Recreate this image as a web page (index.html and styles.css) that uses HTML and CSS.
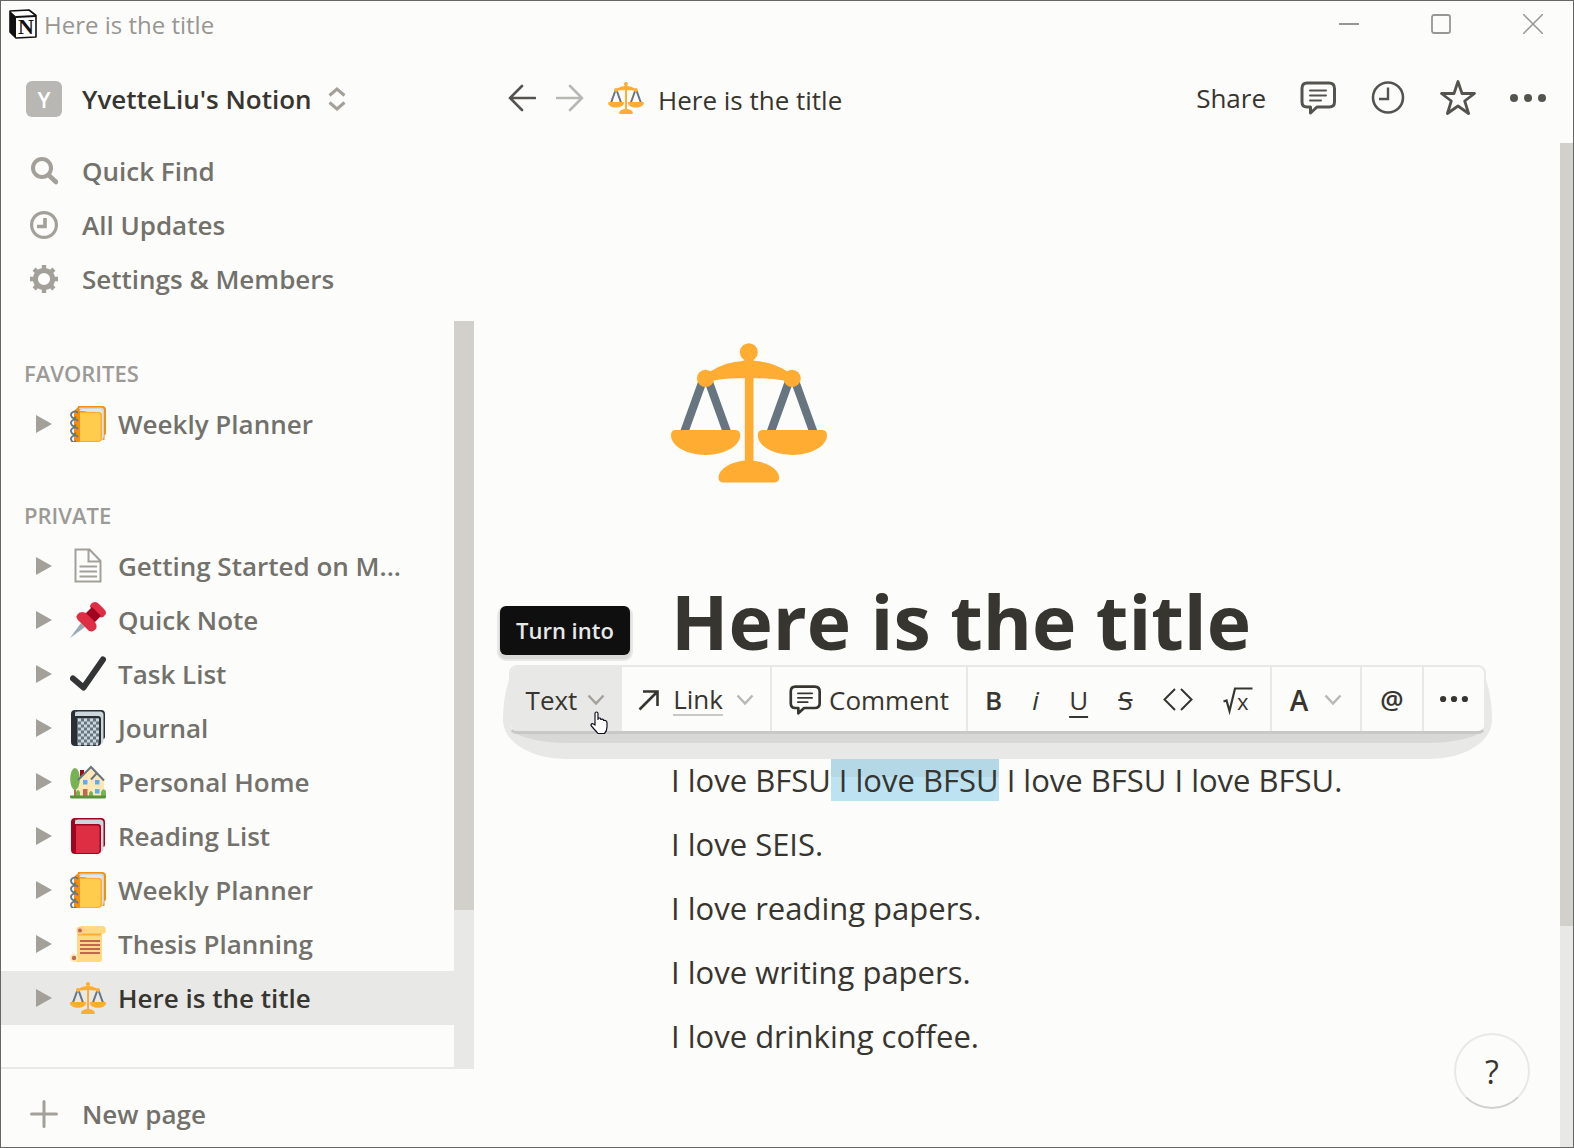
FILE: index.html
```html
<!DOCTYPE html>
<html lang="en">
<head>
<meta charset="utf-8">
<title>Here is the title</title>
<link rel="stylesheet" href="styles.css">
</head>
<body>
<svg class="defs" aria-hidden="true">
  <symbol id="scales" viewBox="96 69 469 420">
    <path d="M190 186 136 336M210 186 264 336M450 186 396 336M470 186 524 336" stroke="#66757f" stroke-width="25" fill="none"/>
    <g fill="#ffac33">
      <path d="M318 110h26v320h-26z"/>
      <path d="M214 154Q262 125 312 123Q330 110 348 123Q398 125 446 154L436 181Q390 174 330 174T224 181z"/>
      <circle cx="330" cy="96" r="27"/><circle cx="200" cy="175" r="26"/><circle cx="460" cy="175" r="26"/>
      <path d="M109 330H291Q304 331 304 346C304 378 258 405 200 405S96 378 96 346Q96 331 109 330zM370 330H552Q565 331 565 346C565 378 519 405 461 405S357 378 357 346Q357 331 370 330z"/>
      <path d="M252 488H408Q421 487 421 473C421 447 380 422 330 422S239 447 239 473Q239 487 252 488z"/>
    </g>
  </symbol>
  <symbol id="notebook" viewBox="0 0 36 36">
    <path d="M8 0H32Q36 0 36 4V27Q36 29 34.500 29V34L8 32z" fill="#f4900c"/>
    <path d="M9 3Q9 1.500 11 1.500H31Q34 1.500 34 4V30Q34 33 31 35L29 10z" fill="#ccd6dd"/>
    <path d="M9 5Q10 3 13 3H30Q32.500 3 32.500 6V32L30 34V6z" fill="#e1e8ed"/>
    <path d="M5 6H29Q32 6 32 9V32Q32 36 28 36H5z" fill="#ffac33"/>
    <path d="M10 7H28Q30.500 7 30.500 9.500V32Q30.500 35 27.500 35H10z" fill="#ffcc4d"/>
    <path d="M4 5 8 1 10 6V36H4z" fill="#f4900c"/>
    <path d="M8 7Q6 4.500 3 6T1.500 10.500 6 11M8 15Q6 12.500 3 14T1.500 18.500 6 19M8 23Q6 20.500 3 22T1.500 26.500 6 27M8 31Q6 28.500 3 30T1.500 34.500 6 35" fill="none" stroke="#66757f" stroke-width="1.800"/>
  </symbol>
  <symbol id="comment" viewBox="0 0 36 36">
    <path d="M7 3H29Q34.500 3 34.500 8.500V22Q34.500 27 29 27H17L10.500 33V27H7Q2 27 2 22V8.500Q2 3 7 3z" fill="none" stroke="currentColor" stroke-width="3" stroke-linejoin="round"/>
    <path d="M10 10.500H26M10 15.500H26M10 20.500H21" fill="none" stroke="currentColor" stroke-width="2" stroke-linecap="round"/>
  </symbol>
  <symbol id="arrow" viewBox="0 0 28 28">
    <path d="M27 14H2M14 2 2 14 14 26" fill="none" stroke="currentColor" stroke-width="2.600" stroke-linecap="round"/>
  </symbol>
  <symbol id="chevron" viewBox="0 0 18 12">
    <path d="M1.500 1.500 9 9.500 16.500 1.500" fill="none" stroke="currentColor" stroke-width="2.400"/>
  </symbol>
  <symbol id="triangle" viewBox="0 0 16 18"><path d="M0 0 16 9 0 18z" fill="currentColor"/></symbol>
  <symbol id="dots" viewBox="0 0 36 36">
    <g fill="currentColor"><circle cx="4" cy="18" r="4"/><circle cx="18" cy="18" r="4"/><circle cx="32" cy="18" r="4"/></g>
  </symbol>
</svg>

<div class="window">
  <header class="titlebar">
    <svg class="logo" viewBox="0 0 28 30" aria-hidden="true">
      <path d="M1 2 20 1 27 6.500V28L7 29 1 23z" fill="#fff" stroke="#111" stroke-width="1.600" stroke-linejoin="round"/>
      <path d="M1 2 7 7.500V29L1 23z" fill="#111"/>
      <path d="M7 8 27 7" stroke="#111" stroke-width="2.200"/>
      <text x="17" y="25" text-anchor="middle" class="logo-letter">N</text>
    </svg>
    <span class="window-title">Here is the title</span>
    <div class="window-controls">
      <button type="button" aria-label="Minimize"><svg viewBox="0 0 20 20"><path d="M0 10H20" stroke-width="2"/></svg></button>
      <button type="button" aria-label="Maximize"><svg viewBox="0 0 20 20"><rect x="1" y="1" width="18" height="18" rx="2" stroke-width="1.800"/></svg></button>
      <button type="button" aria-label="Close"><svg viewBox="0 0 20 20"><path d="M0 0 20 20M20 0 0 20" stroke-width="1.500"/></svg></button>
    </div>
  </header>

  <div class="body">
    <aside class="sidebar">
      <button type="button" class="workspace">
        <span class="avatar">Y</span>
        <span>YvetteLiu's Notion</span>
        <svg class="updown" viewBox="0 0 18 24" aria-hidden="true"><path d="M1.500 8.500 9 2 16.500 8.500M1.500 15.500 9 22 16.500 15.500"/></svg>
      </button>

      <nav class="quick">
        <a href="#find"><svg viewBox="0 0 28 28"><circle cx="12" cy="11" r="9" fill="none" stroke="currentColor" stroke-width="4"/><path d="M18.500 18 26 25" stroke="currentColor" stroke-width="4.600" stroke-linecap="round"/></svg>Quick Find</a>
        <a href="#updates"><svg viewBox="0 0 28 28"><circle cx="14" cy="14" r="12.400" fill="none" stroke="currentColor" stroke-width="3.200"/><path d="M15 7V15.500H7" fill="none" stroke="currentColor" stroke-width="3.600"/></svg>All Updates</a>
        <a href="#settings"><svg viewBox="0 0 28 28"><circle cx="14" cy="14" r="8.600" fill="none" stroke="currentColor" stroke-width="5"/><path d="M14 0V5M14 23V28M0 14H5M23 14H28M4.100 4.100 7.600 7.600M20.400 20.400 23.900 23.900M4.100 23.900 7.600 20.400M20.400 7.600 23.900 4.100" stroke="currentColor" stroke-width="4.400"/></svg>Settings &amp; Members</a>
      </nav>

      <div class="tree">
        <div class="tree-list">
          <section>
            <h2>FAVORITES</h2>
            <a class="row" href="#weekly"><svg class="tri"><use href="#triangle"/></svg><svg class="emoji"><use href="#notebook"/></svg><span>Weekly Planner</span></a>
          </section>
          <section>
            <h2>PRIVATE</h2>
            <a class="row" href="#start"><svg class="tri"><use href="#triangle"/></svg>
              <svg class="emoji" viewBox="0 0 36 36"><path d="M5.500 1.500H19.500L30.500 13V33.500H5.500zM18.500 2V13.500H30M9.500 18.500H27M9.500 23.500H27M9.500 28.500H27" fill="none" stroke="#a3a09a" stroke-width="2"/></svg>
              <span>Getting Started on M...</span></a>
            <a class="row" href="#note"><svg class="tri"><use href="#triangle"/></svg>
              <svg class="emoji" viewBox="0 0 36 36"><path d="M0 36 11 21 15 25z" fill="#99aab5"/><path d="M20 5Q20 2 23 .500Q26-1 29 2L34 7Q37 10 35.500 12.500T31 15.500z" fill="#dd2e44"/><path d="M15 12 22 5 31 14 24 21z" fill="#a0041e"/><path d="M7 13Q9 10 12 10Q15 10 17 12L25 20Q27 23 26.500 25.500T22 29.500Q19 30 16 26L10 20Q5 16 7 13z" fill="#dd2e44"/></svg>
              <span>Quick Note</span></a>
            <a class="row" href="#tasks"><svg class="tri"><use href="#triangle"/></svg>
              <svg class="emoji" viewBox="0 0 36 36"><path d="M3 22.500 13.500 31.500 33 3.500" fill="none" stroke="#333436" stroke-width="6" stroke-linecap="round" stroke-linejoin="round"/></svg>
              <span>Task List</span></a>
            <a class="row" href="#journal"><svg class="tri"><use href="#triangle"/></svg>
              <svg class="emoji" viewBox="0 0 36 36"><path d="M5 0H31Q35 0 35 4V27Q35 29 33 29L10 32z" fill="#292f33"/><path d="M5 4Q5 1.500 8 1.500H30Q33.500 1.500 33.500 5V31Q33.500 33 30 35L8 10z" fill="#ccd6dd"/><path d="M1 4Q1 0 5 0V6H28Q31 6 31 9V32Q31 36 27 36H5Q1 36 1 32z" fill="#292f33"/><path d="M7 8H27Q29 8 29 10V32Q29 35 27 35H7z" fill="#66757f"/><path d="M8 10H29M8 16H29M8 22H29M8 28H29M8 34H28" stroke="#ccd6dd" stroke-width="3" stroke-dasharray="3 3"/><path d="M11 13H29M11 19H29M11 25H29M11 31H29" stroke="#ccd6dd" stroke-width="3" stroke-dasharray="3 3"/></svg>
              <span>Journal</span></a>
            <a class="row" href="#home"><svg class="tri"><use href="#triangle"/></svg>
              <svg class="emoji" viewBox="0 0 36 36"><path d="M10 6H14V13H10z" fill="#a0041e"/><path d="M4 22H6V34H4z" fill="#c1694f"/><path d="M9 15 21 4 34 17V33H7V24z" fill="#ffe8b6"/><ellipse cx="5" cy="15" rx="4.800" ry="11" fill="#77b255"/><path d="M8 16 21 3 34 16.500M21 15.500 27 9" fill="none" stroke="#66757f" stroke-width="2"/><path d="M13 16h4.500v4.500H13zM25 16h4.500v4.500H25zM25 25h4.500v4.500H25z" fill="#5dadec"/><path d="M13 25h4.500v7H13z" fill="#c1694f"/><path d="M6 32V28Q7.500 24 10 28V32zM19 32V29Q21 25 23 29V32zM31 32V28Q33 23 36 27V32z" fill="#77b255"/><path d="M0 31.500H36V33Q36 34.500 34 34.500H2Q0 34.500 0 33z" fill="#5c913b"/></svg>
              <span>Personal Home</span></a>
            <a class="row" href="#reading"><svg class="tri"><use href="#triangle"/></svg>
              <svg class="emoji" viewBox="0 0 36 36"><path d="M5 0H31Q35 0 35 4V27Q35 29 33 29L10 32z" fill="#a0041e"/><path d="M5 4Q5 1.500 8 1.500H30Q33.500 1.500 33.500 5V31Q33.500 33 30 35L8 10z" fill="#ccd6dd"/><path d="M1 4Q1 0 5 0V6H28Q31 6 31 9V32Q31 36 27 36H5Q1 36 1 32z" fill="#a0041e"/><path d="M6 7.500H27Q29.500 7.500 29.500 10V32Q29.500 35 27 35H6z" fill="#dd2e44"/></svg>
              <span>Reading List</span></a>
            <a class="row" href="#weekly2"><svg class="tri"><use href="#triangle"/></svg><svg class="emoji"><use href="#notebook"/></svg><span>Weekly Planner</span></a>
            <a class="row" href="#thesis"><svg class="tri"><use href="#triangle"/></svg>
              <svg class="emoji" viewBox="0 0 36 36"><path d="M7 3H32V33Q32 36 29 36H4L7 30z" fill="#ffd983"/><path d="M11 0H32Q36 0 36 4T32 8H11z" fill="#ffd983"/><path d="M8 8.500H31" stroke="#ffac33" stroke-width="2"/><circle cx="10.500" cy="4.500" r="4" fill="#ffcc8a"/><circle cx="10" cy="4.500" r="2" fill="#c1694f"/><circle cx="4" cy="32" r="4" fill="#ffe8b6"/><circle cx="4" cy="32" r="2.200" fill="#c1694f"/><path d="M10 15H30M10 19H30M10 23H30M10 27H30" stroke="#c1694f" stroke-width="2"/></svg>
              <span>Thesis Planning</span></a>
            <a class="row current" href="#title" aria-current="page"><svg class="tri"><use href="#triangle"/></svg><svg class="emoji"><use href="#scales"/></svg><span>Here is the title</span></a>
          </section>
        </div>
        <div class="scrollbar"><div class="thumb"></div></div>
      </div>

      <button type="button" class="new-page"><svg viewBox="0 0 28 28"><path d="M14 1.500V26.500M1.500 14H26.500" stroke="currentColor" stroke-width="3" stroke-linecap="round"/></svg>New page</button>
    </aside>

    <main class="main">
      <div class="topbar">
        <button type="button" class="nav-arrow" aria-label="Back"><svg><use href="#arrow"/></svg></button>
        <button type="button" class="nav-arrow forward" aria-label="Forward"><svg><use href="#arrow"/></svg></button>
        <a class="crumb" href="#title"><svg><use href="#scales"/></svg><span>Here is the title</span></a>
        <div class="actions">
          <button type="button" class="share">Share</button>
          <button type="button" aria-label="Comments"><svg><use href="#comment"/></svg></button>
          <button type="button" aria-label="History"><svg viewBox="0 0 36 36"><circle cx="18" cy="17.500" r="15" fill="none" stroke="currentColor" stroke-width="2.600"/><path d="M18 7.500V19H9" fill="none" stroke="currentColor" stroke-width="2.400"/></svg></button>
          <button type="button" aria-label="Favorite"><svg viewBox="0 0 36 36"><path d="M18 1.500 22 13.500 34.500 13.500 24.700 21 28.600 33.500 18 26 7.400 33.500 11.300 21 1.500 13.500 14 13.500z" fill="none" stroke="currentColor" stroke-width="2.800" stroke-linejoin="round"/></svg></button>
          <button type="button" aria-label="More"><svg><use href="#dots"/></svg></button>
        </div>
      </div>

      <div class="scroller">
        <article class="page">
          <svg class="page-icon" aria-hidden="true"><use href="#scales"/></svg>
          <h1>Here is the title</h1>
          <p>I love BFSU<mark> I love BFSU</mark> I love BFSU I love BFSU.</p>
          <p>I love SEIS.</p>
          <p>I love reading papers.</p>
          <p>I love writing papers.</p>
          <p>I love drinking coffee.</p>
        </article>
        <div class="scrollbar"><div class="thumb"></div></div>
      </div>

      <div class="tooltip" role="tooltip">Turn into</div>
      <div class="toolbar" role="toolbar">
        <button type="button" class="cell turn">Text<svg class="chev"><use href="#chevron"/></svg></button>
        <button type="button" class="cell link"><svg class="out" viewBox="0 0 22 22"><path d="M1.500 20.500 19 3M5 2.500H19.500V17" fill="none" stroke="currentColor" stroke-width="2.600"/></svg><span class="under">Link</span><svg class="chev"><use href="#chevron"/></svg></button>
        <button type="button" class="cell comment"><svg class="bubble"><use href="#comment"/></svg>Comment</button>
        <div class="cell marks">
          <button type="button" class="bold">B</button>
          <button type="button" class="italic">i</button>
          <button type="button" class="underline">U</button>
          <button type="button" class="strike">S</button>
          <button type="button" aria-label="Code"><svg viewBox="0 0 30 26"><path d="M12 2 1.500 12.500 12 23M18 2 28.500 12.500 18 23" fill="none" stroke="currentColor" stroke-width="2"/></svg></button>
          <button type="button" aria-label="Equation"><svg viewBox="0 0 30 26"><path d="M.500 14.500 3.500 13.500 6.500 24 12 1.500H29.500" fill="none" stroke="currentColor" stroke-width="2.200"/><text x="14" y="23" class="radicand">x</text></svg></button>
        </div>
        <button type="button" class="cell color"><span class="semi">A</span><svg class="chev"><use href="#chevron"/></svg></button>
        <button type="button" class="cell at">@</button>
        <button type="button" class="cell more" aria-label="More"><svg><use href="#dots"/></svg></button>
      </div>
      <svg class="cursor" viewBox="0 0 18 24" aria-hidden="true"><path d="M5 14V2.500Q5 1 6.500 1T8 2.500V9V7.500Q10.500 6 11 9V8.500Q13.500 7.500 13.800 10V9.500Q17 9 17 12V16Q17 20 14.500 22.500H8Q6 20 4 18L1 14.500Q1 12 3.500 13z" fill="#fff" stroke="#112" stroke-width="1.200"/></svg>
      <button type="button" class="help">?</button>
    </main>
  </div>
</div>
</body>
</html>
```

FILE: styles.css
```css
* { box-sizing: border-box; }

body {
  margin: 0;
  background: #fcfcfa;
  color: #37352f;
  font-family: "Open Sans", "Noto Sans", sans-serif;
  font-size: 26px;
}

button {
  padding: 0;
  border: 0;
  background: none;
  color: inherit;
  font: inherit;
}

a { color: inherit; text-decoration: none; }
svg { display: block; flex: none; }
.defs { position: absolute; width: 0; height: 0; }

.window {
  display: flex;
  flex-direction: column;
  min-height: 100vh;
  border: 1px solid #666;
}

/* Title bar */
.titlebar {
  display: flex;
  align-items: center;
  gap: 7px;
  height: 46px;
  padding: 0 30px 0 8px;
  color: #979692;
  font-size: 24px;
}
.logo { width: 28px; height: 30px; }
.logo-letter { font: bold 22px "Liberation Serif", serif; fill: #111; }
.window-controls { display: flex; gap: 72px; margin-left: auto; }
.window-controls svg { width: 20px; height: 20px; fill: none; stroke: currentColor; }

.body {
  display: grid;
  grid-template-columns: 473px 1fr;
  flex: 1;
}

/* Sidebar */
.sidebar {
  display: flex;
  flex-direction: column;
  color: #72716b;
  font-weight: 600;
}
.workspace {
  display: flex;
  align-items: center;
  height: 54px;
  margin-top: 25px;
  padding-left: 25px;
  color: #37352f;
}
.avatar {
  width: 36px;
  margin-right: 20px;
  border-radius: 6px;
  background: #b8b7b4;
  color: #fff;
  font-size: 22px;
  line-height: 36px;
}
.updown {
  width: 18px;
  height: 24px;
  margin-left: 16px;
  fill: none;
  stroke: #a3a09a;
  stroke-width: 3;
}
.quick { margin: 18px 0 15px; }
.quick a {
  display: flex;
  align-items: center;
  gap: 24px;
  height: 54px;
  padding-left: 29px;
}
.quick svg, .new-page svg { width: 28px; height: 28px; color: #a3a09a; }

.tree {
  display: flex;
  flex: 1;
  border-bottom: 2px solid #e8e8e6;
}
.tree-list { flex: 1; min-width: 0; padding-top: 28px; }
.tree-list section { margin-bottom: 40px; }
.tree-list h2 {
  margin: 0;
  padding: 4px 23px;
  color: #9b9a96;
  font-size: 22px;
  font-weight: 600;
  line-height: 40px;
}
.row {
  display: flex;
  align-items: center;
  height: 54px;
  padding-left: 35px;
}
.row span { white-space: nowrap; }
.tri { width: 16px; height: 18px; margin-right: 18px; color: #a3a09a; }
.emoji { width: 36px; height: 36px; margin-right: 12px; }
.current { background: #e8e8e6; color: #37352f; }
.scrollbar { background: #e8e8e6; }
.thumb { background: #d1d0cb; }
.tree .scrollbar { width: 20px; }
.tree .thumb { height: 79%; }

.new-page {
  display: flex;
  align-items: center;
  gap: 24px;
  height: 78px;
  padding: 12px 0 0 29px;
}

/* Main column */
.main {
  position: relative;
  isolation: isolate;
  display: flex;
  flex-direction: column;
}
.topbar {
  display: flex;
  align-items: center;
  height: 96px;
  padding: 6px 27px 0 34px;
}
.nav-arrow { margin-right: 20px; color: #55534e; }
.nav-arrow svg { width: 28px; height: 28px; }
.forward { color: #b8b7b4; }
.forward svg { transform: scaleX(-1); }
.crumb { display: flex; align-items: center; gap: 14px; margin-left: 4px; }
.crumb svg { width: 36px; height: 32px; }
.crumb span { padding-top: 3px; }
.actions {
  display: flex;
  align-items: center;
  gap: 34px;
  margin-left: auto;
  color: #55534e;
}
.actions svg { width: 36px; height: 36px; }
.share { color: #37352f; }

.scroller { display: flex; flex: 1; }
.scroller .scrollbar { width: 13px; }
.scroller .thumb { height: 78%; }
.page { flex: 1; padding: 200px 80px 40px 197px; }
.page-icon { width: 156px; height: 140px; }
h1 {
  margin: 90px 0 79px;
  font-size: 75px;
  font-weight: 700;
  line-height: 96px;
}
.page p { margin: 0; font-size: 31px; line-height: 64px; }
mark {
  background: linear-gradient(#b4d8e6 18px, #bde2f2 18px);
  color: inherit;
}

/* Floating formatting bar */
.tooltip {
  position: absolute;
  top: 559px;
  left: 26px;
  padding: 0 16px;
  border-radius: 6px;
  background: #0f0f0f;
  box-shadow: 0 3px 0 1px #d8d8d7, 0 3px 0 3px #e8e8e6;
  color: #e8e8e6;
  font-size: 22px;
  font-weight: 600;
  line-height: 49px;
}
.toolbar {
  position: absolute;
  top: 618px;
  left: 35px;
  display: flex;
  height: 69px;
  border: 2px solid #e8e8e6;
  border-bottom: 3px solid #c8c8c6;
  border-radius: 8px;
  background: #fcfcfa;
}
.toolbar::before, .toolbar::after {
  content: "";
  position: absolute;
  z-index: -1;
}
.toolbar::before {
  inset: 0 -8px -28px;
  border-radius: 20px 20px 70px 70px / 60px 60px 44px 44px;
  background: #e8e8e6;
}
.toolbar::after {
  inset: 10px -2px -12px;
  border-radius: 8px 8px 60px 60px / 8px 8px 18px 18px;
  background: #d8d8d7;
}
.cell {
  display: flex;
  align-items: center;
  justify-content: center;
  padding-top: 2px;
  border-right: 2px solid #e8e8e6;
}
.cell:last-child { border-right: 0; }
.chev { width: 18px; height: 12px; color: #b8b7b4; }
.turn { gap: 10px; width: 111px; border-radius: 6px 0 0 6px; background: #e8e8e6; }
.turn .chev { color: #a3a09a; }
.link { gap: 13px; width: 150px; }
.out { width: 22px; height: 22px; }
.under { border-bottom: 2px solid #c8c8c6; line-height: 30px; }
.comment { gap: 8px; width: 196px; }
.bubble { width: 32px; height: 32px; }
.marks {
  justify-content: space-between;
  width: 304px;
  padding-right: 17px;
  padding-left: 17px;
}
.marks svg { width: 30px; height: 26px; overflow: visible; }
.bold, .semi { font-weight: 600; }
.semi { font-size: 28px; }
.italic { font-style: italic; }
.underline { text-decoration: underline; text-underline-offset: 6px; }
.strike { text-decoration: line-through; }
.radicand { font-size: 22px; fill: currentColor; }
.color { gap: 16px; width: 90px; }
.at { width: 62px; padding-top: 0; font-weight: 600; }
.more { width: 60px; padding-top: 0; }
.more svg { width: 28px; height: 28px; }
.cursor {
  position: absolute;
  top: 664px;
  left: 116px;
  width: 18px;
  height: 24px;
}
.help {
  position: absolute;
  right: 43px;
  bottom: 38px;
  width: 76px;
  height: 76px;
  border: 2px solid #e8e8e6;
  border-bottom-color: #d1d0cb;
  border-radius: 50%;
  background: #fcfcfa;
  font-size: 32px;
}
```
